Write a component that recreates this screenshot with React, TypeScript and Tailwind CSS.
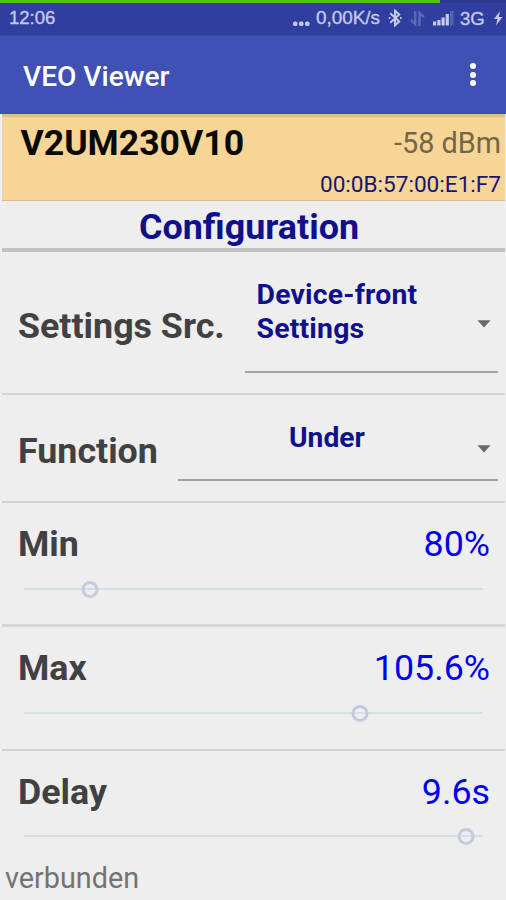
import React from "react";

function StatusBar() {
  return (
    <header className="h-[35px] bg-[#303f9f] text-[#c5cae9]">
      <div className="h-[3px] bg-[#2c3790]">
        <div className="h-[2.5px] w-[440px] bg-[#4fc80c]" />
      </div>
      <div className="flex h-8 items-start pl-[9px] font-['Liberation_Sans',Arial,sans-serif] text-[18.5px] leading-8 [-webkit-text-stroke:0.35px_#c5cae9]">
        <span className="w-[283px] shrink-0">
          <span className="relative -top-px">12:06</span>
        </span>
        <svg className="mt-[18px] shrink-0" width="20" height="6" viewBox="0 0 20 6" fill="currentColor">
          <rect x="1" y="0.5" width="4.500" height="4.500" rx="1.8" />
          <rect x="7" y="0.5" width="4.500" height="4.500" rx="1.8" />
          <rect x="13" y="0.5" width="4.500" height="4.500" rx="1.8" />
        </svg>
        <span className="ml-[4px] w-[72px] shrink-0 whitespace-nowrap text-[18.9px]">
          <span className="relative -top-px">0,00K/s</span>
        </span>
        <svg className="mt-[6px] shrink-0" width="14" height="18" viewBox="0 0 14 18" fill="none" stroke="currentColor" strokeWidth="2">
          <path d="M2.200 4.300 11.200 12.500 7 16.300V1.700L11.200 5.500 2.200 13.700" />
          <path d="M12.900 8v2M1.600 8v2" strokeWidth="1.500" />
        </svg>
        <svg className="ml-[8px] mt-[8px] shrink-0" width="15" height="16" viewBox="0 0 15 16" fill="none" stroke="#5d69b8" strokeWidth="2.400">
          <path d="M5.200 0v13L1 9M9.500 15V2L14 6.200" />
        </svg>
        <svg className="ml-[8px] mt-[8px] shrink-0" width="21" height="15" viewBox="0 0 21 15" fill="currentColor">
          <rect x="0" y="10.500" width="3.200" height="4" />
          <rect x="4.300" y="9" width="3.200" height="5.500" />
          <rect x="8.500" y="6.500" width="3.200" height="8" />
          <rect x="12.700" y="3" width="3.200" height="11.500" />
          <rect x="17" y="0" width="3.500" height="14.500" fill="#5562b2" />
        </svg>
        <span className="ml-[6px] w-[34px] shrink-0 text-[18.5px]">3G</span>
        <svg className="mt-[8px] shrink-0" width="9" height="15" viewBox="0 0 9 15" fill="currentColor">
          <path d="M6 0 0 8h3.500L2 14.500 8.500 6H4.800z" />
        </svg>
      </div>
    </header>
  );
}

function AppBar() {
  return (
    <div className="flex h-[79px] items-start justify-between border-t border-[#3948a8] bg-[#3f51b5] pl-[23px] pr-[30px] text-white">
      <h1 className="pt-[23px] text-[28.1px] font-medium leading-[36px]">VEO Viewer</h1>
      <button aria-label="More options" className="mt-[27px] flex flex-col gap-[2.300px]">
        <span className="size-[6.300px] rounded-full bg-white" />
        <span className="size-[6.300px] rounded-full bg-white" />
        <span className="size-[6.300px] rounded-full bg-white" />
      </button>
    </div>
  );
}

function DeviceHeader() {
  return (
    <section className="ml-[2px] mr-px flex h-[87px] justify-between border-b border-t-[3px] border-b-[#d9bd8b] border-t-[#dcc08a] bg-[#f7d596]">
      <h2 className="pl-[18.500px] pt-[6px] text-[35.6px] font-bold leading-[40px] text-[#0a0a05]">V2UM230V10</h2>
      <div className="pr-[4px] pt-[9px] text-right">
        <p className="text-[28.8px] leading-[34px] text-[#736548]">-58 dBm</p>
        <p className="mt-[7px] text-[22.6px] leading-[36px] text-[#1b1374]">00:0B:57:00:E1:F7</p>
      </div>
    </section>
  );
}

function Arrow() {
  return (
    <svg width="14" height="8" viewBox="0 0 14 8" fill="#696969">
      <path d="M.5.300h13L7 7.500z" />
    </svg>
  );
}

type SliderProps = { label: string; value: string; position: number; row: string; track: string };

function SliderRow({ label, value, position, row, track }: SliderProps) {
  return (
    <section className={row}>
      <div className="flex justify-between pl-[16px] pr-[15px] text-[35.8px] leading-[40px]">
        <span className="font-bold text-[#414141]">{label}</span>
        <span className="text-[#0000f0]">{value}</span>
      </div>
      <div className="relative mx-[22px] flex h-[18px] items-center">
        <div className={track} />
        <div
          className="absolute top-[0.500px] size-[17px] -translate-x-1/2 rounded-full border-[3px] border-[#c7c7e0]"
          style={{ left: position }}
        />
      </div>
    </section>
  );
}

export default function App() {
  return (
    <main className="h-[900px] w-[506px] overflow-hidden bg-[#eeeeee] font-[Roboto,sans-serif]">
      <StatusBar />
      <AppBar />
      <DeviceHeader />
      <div className="ml-[2px] mr-px">
        <h2 className="h-[51px] border-b-4 border-[#c1c1c1] pr-[9px] pt-[6px] text-center text-[35.9px] font-bold leading-[40px] text-[#10108c]">
          Configuration
        </h2>
        <section className="flex h-[143px] border-b-2 border-[#d5d5d5] pl-[16px] pr-[7px]">
          <span className="w-[227px] whitespace-nowrap pt-[54px] text-[35.8px] font-bold leading-[40px] text-[#414141]">Settings Src.</span>
          <div className="flex h-[121px] flex-1 items-start justify-between border-b-2 border-[#a5a5a5] pl-[11.500px] pr-[7px]">
            <span className="w-[190px] pt-[26px] text-[28.4px] font-bold leading-[34px] tracking-[0.2px] text-[#10108c]">Device-front Settings</span>
            <div className="pt-[67.500px]"><Arrow /></div>
          </div>
        </section>
        <section className="flex h-[108px] border-b-2 border-[#d0d0d0] pl-[16px] pr-[7px]">
          <span className="w-[160px] pt-[36px] text-[35.8px] font-bold leading-[40px] text-[#414141]">Function</span>
          <div className="flex h-[86px] flex-1 items-start justify-between border-b-2 border-[#a0a0a0] pl-[111px] pr-[7px]">
            <span className="pt-[26px] text-[28.2px] font-bold leading-[34px] text-[#10108c]">Under</span>
            <div className="pt-[49.500px]"><Arrow /></div>
          </div>
        </section>
        <SliderRow label="Min" value="80%" position={65.5} row="flex h-[124px] flex-col gap-[16px] border-b-[3px] border-[#d7d7d7] pt-[21px]" track="h-[2px] w-full bg-[#d1e1e1]" />
        <SliderRow label="Max" value="105.6%" position={336} row="flex h-[124px] flex-col gap-[16px] border-b-2 border-[#d0d0d0] pt-[21px]" track="h-[2px] w-full bg-[#d1e2e5]" />
        <SliderRow label="Delay" value="9.6s" position={441.5} row="flex h-[110px] flex-col gap-[15px] pt-[21px]" track="h-[2px] w-full bg-[#d0dfe9]" />
      </div>
      <footer className="pl-[5px] text-[28.8px] leading-[34px] text-[#737373]">verbunden</footer>
    </main>
  );
}
